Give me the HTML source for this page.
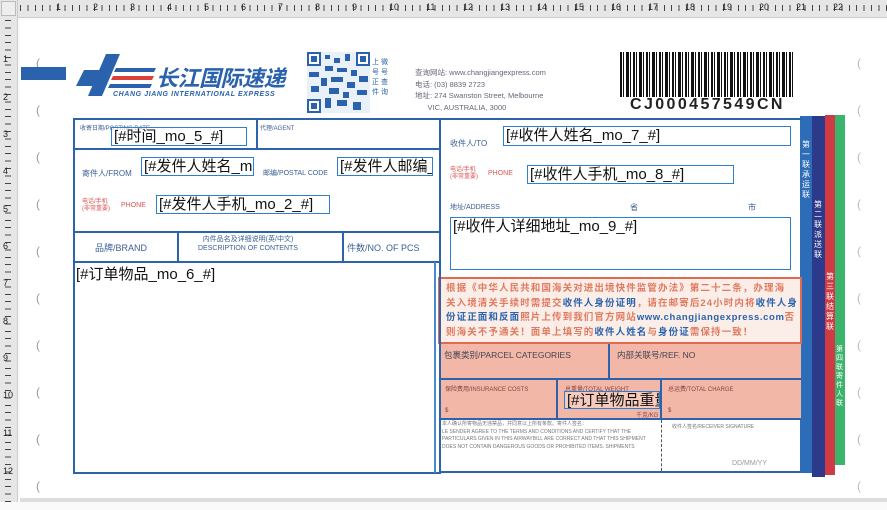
<!DOCTYPE html>
<html><head><meta charset="utf-8"><style>
*{margin:0;padding:0;box-sizing:border-box}
body{width:887px;height:502px;position:relative;overflow:hidden;background:#fafafa;font-family:"Liberation Sans","Noto Sans CJK SC",sans-serif}
.a{position:absolute}
.f{position:absolute;border:1px solid #2f7fd0;background:rgba(255,255,255,.6);font-family:"Liberation Sans","Noto Sans CJK SC",sans-serif;font-size:15px;line-height:17px;color:#111;white-space:nowrap;overflow:hidden;padding-left:2px}
.lb{position:absolute;font-size:8px;color:#3a5f95;white-space:nowrap}
.ln{position:absolute;background:#2d63ad}
.sm{position:absolute;font-size:6px;color:#556;white-space:nowrap}
.b{color:#2a62ad}
</style></head><body>
<div class="a" style="left:0;top:0;width:887px;height:18px;background:#e6e6e6;border-bottom:1px solid #ccc"></div>
<div class="a" style="left:0;top:0;width:18px;height:502px;background:#e6e6e6;border-right:1px solid #ccc"></div>
<div class="a" style="left:1px;top:1px;width:15px;height:15px;border:1px solid #bbb;background:#eee"></div>
<div class="a" style="left:20px;top:5px;width:867px;height:6px;background:repeating-linear-gradient(90deg,#444 0 1px,transparent 1px 7.4px)"></div>
<div class="a" style="left:5px;top:20px;width:6px;height:482px;background:repeating-linear-gradient(180deg,#444 0 1px,transparent 1px 7.4px)"></div>
<div class="a" style="left:0;top:2px;width:887px;font-size:9px;color:#222">
<span class="a" style="left:56px">1</span><span class="a" style="left:93px">2</span><span class="a" style="left:130px">3</span><span class="a" style="left:167px">4</span><span class="a" style="left:204px">5</span><span class="a" style="left:241px">6</span><span class="a" style="left:278px">7</span><span class="a" style="left:315px">8</span><span class="a" style="left:352px">9</span><span class="a" style="left:389px">10</span><span class="a" style="left:426px">11</span><span class="a" style="left:463px">12</span><span class="a" style="left:500px">13</span><span class="a" style="left:537px">14</span><span class="a" style="left:574px">15</span><span class="a" style="left:611px">16</span><span class="a" style="left:648px">17</span><span class="a" style="left:685px">18</span><span class="a" style="left:722px">19</span><span class="a" style="left:759px">20</span><span class="a" style="left:796px">21</span><span class="a" style="left:833px">22</span></div>
<div class="a" style="left:3px;top:0;font-size:9px;color:#222">
<span class="a" style="top:54px">1</span><span class="a" style="top:92px">2</span><span class="a" style="top:129px">3</span><span class="a" style="top:166px">4</span><span class="a" style="top:204px">5</span><span class="a" style="top:241px">6</span><span class="a" style="top:278px">7</span><span class="a" style="top:316px">8</span><span class="a" style="top:353px">9</span><span class="a" style="top:390px">10</span><span class="a" style="top:428px">11</span><span class="a" style="top:466px">12</span></div>
<div class="a" style="left:20px;top:20px;width:867px;height:478px;background:#fff"></div>
<div class="a" style="left:20px;top:498px;width:867px;height:4px;background:#ddd"></div>
<div class="a" style="left:36px;top:40px;font-size:12px;color:#999;line-height:47px">(<br>(<br>(<br>(<br>(<br>(<br>(<br>(<br>(<br>(</div>
<div class="a" style="left:857px;top:40px;font-size:12px;color:#bbb;line-height:47px">(<br>(<br>(<br>(<br>(<br>(<br>(<br>(<br>(<br>(</div>
<div class="a" style="left:21px;top:67px;width:45px;height:13px;background:#2a62ad"></div>
<svg class="a" style="left:76px;top:50px" width="84" height="50">
<path d="M8 20 L28 20 L20 36 L0 36Z" fill="#2a62ad"/><path d="M30 4 L44 4 L26 46 L12 46Z" fill="#2a62ad"/>
<path d="M40 18 L80 18 L78 22 L38 22Z" fill="#2a62ad"/><path d="M37 26 L78 26 L76 30 L35 30Z" fill="#d9403a"/><path d="M34 34 L76 34 L74 38 L32 38Z" fill="#2a62ad"/></svg>
<div class="a" style="left:156px;top:61px;font-size:22px;font-weight:bold;font-style:italic;color:#2a62ad;letter-spacing:-0.5px">长江国际速递</div>
<div class="a" style="left:113px;top:91px;font-size:7px;font-style:italic;font-weight:bold;color:#2a62ad;letter-spacing:.6px">CHANG JIANG INTERNATIONAL EXPRESS</div>
<svg class="a" style="left:307px;top:52px" width="63" height="61">
<rect width="63" height="61" fill="#eaf0f8"/>
<g fill="#2a62ad"><rect x="0" y="0" width="14" height="14"/><rect x="49" y="0" width="14" height="14"/><rect x="0" y="47" width="14" height="14"/></g>
<g fill="#fff"><rect x="2" y="2" width="10" height="10"/><rect x="51" y="2" width="10" height="10"/><rect x="2" y="49" width="10" height="10"/></g>
<g fill="#2a62ad"><rect x="4" y="4" width="6" height="6"/><rect x="53" y="4" width="6" height="6"/><rect x="4" y="51" width="6" height="6"/>
<rect x="18" y="3" width="5" height="4"/><rect x="27" y="6" width="6" height="5"/><rect x="38" y="2" width="5" height="7"/><rect x="18" y="14" width="8" height="5"/><rect x="30" y="16" width="10" height="4"/><rect x="44" y="18" width="6" height="6"/><rect x="2" y="20" width="10" height="5"/><rect x="52" y="24" width="9" height="6"/><rect x="14" y="26" width="6" height="8"/><rect x="24" y="25" width="12" height="5"/><rect x="40" y="30" width="8" height="6"/><rect x="4" y="34" width="8" height="6"/><rect x="22" y="36" width="10" height="6"/><rect x="50" y="38" width="10" height="5"/><rect x="18" y="46" width="6" height="10"/><rect x="30" y="48" width="10" height="6"/><rect x="46" y="50" width="8" height="8"/><rect x="36" y="40" width="6" height="6"/></g></svg>
<div class="a" style="left:372px;top:58px;font-size:7px;line-height:10px;color:#2a62ad;width:22px">上 微<br>号 号<br>正 查<br>件 询</div>
<div class="a" style="left:415px;top:67px;font-size:7.5px;line-height:11.5px;color:#667;white-space:nowrap">查询网站: www.changjiangexpress.com<br>电话: (03) 8839 2723<br>地址: 274 Swanston Street, Melbourne<br>&nbsp;&nbsp;&nbsp;&nbsp;&nbsp;&nbsp;VIC, AUSTRALIA, 3000</div>
<div class="a" style="left:620px;top:52px;width:173px;height:45px;background:repeating-linear-gradient(90deg,#111 0 2px,#fff 2px 3px,#111 3px 4px,#fff 4px 6px,#111 6px 9px,#fff 9px 10px,#111 10px 11px,#fff 11px 13px)"></div>
<div class="a" style="left:630px;top:96px;font-size:16px;font-weight:bold;color:#222;letter-spacing:2.4px">CJ000457549CN</div>
<div class="a" style="left:800px;top:116px;width:12px;height:357px;background:#2d6cb6"></div>
<div class="a" style="left:812px;top:116px;width:13px;height:361px;background:#2b3a8a"></div>
<div class="a" style="left:825px;top:115px;width:10px;height:360px;background:#d03a44"></div>
<div class="a" style="left:835px;top:115px;width:10px;height:350px;background:#3bb46c"></div>
<div class="a" style="left:802px;top:140px;width:10px;font-size:8px;line-height:10px;color:#fff">第一联 承运联</div>
<div class="a" style="left:814px;top:200px;width:10px;font-size:8px;line-height:10px;color:#fff">第二联 派送联</div>
<div class="a" style="left:826px;top:272px;width:9px;font-size:8px;line-height:10px;color:#fff">第三联 结算联</div>
<div class="a" style="left:836px;top:345px;width:9px;font-size:7px;line-height:9px;color:#fff">第四联 寄件人联</div>
<div class="a" style="left:73px;top:118px;width:368px;height:356px;border:2px solid #2d63ad"></div>
<div class="ln" style="left:73px;top:148px;width:368px;height:2px"></div>
<div class="ln" style="left:256px;top:118px;width:2px;height:31px"></div>
<div class="ln" style="left:73px;top:231px;width:368px;height:2px"></div>
<div class="ln" style="left:73px;top:261px;width:368px;height:2px"></div>
<div class="ln" style="left:177px;top:231px;width:2px;height:31px"></div>
<div class="ln" style="left:342px;top:231px;width:2px;height:31px"></div>
<div class="ln" style="left:434px;top:262px;width:2px;height:211px;background:#4a88cc"></div>
<div class="lb" style="left:80px;top:123px;font-size:6px">收寄日期/POSTING DATE</div>
<div class="lb" style="left:260px;top:123px;font-size:6px">代理/AGENT</div>
<div class="lb" style="left:82px;top:168px">寄件人/FROM</div>
<div class="lb" style="left:263px;top:168px;font-size:7px">邮编/POSTAL CODE</div>
<div class="lb" style="left:82px;top:199px;font-size:6px;color:#d55;line-height:7px">电话/手机<br>(非常重要)</div>
<div class="lb" style="left:121px;top:202px;font-size:7px;color:#d55">PHONE</div>
<div class="lb" style="left:95px;top:241px;font-size:9px">品牌/BRAND</div>
<div class="lb" style="left:198px;top:235px;font-size:7px;line-height:9px;text-align:center">内件品名及详细说明(英/中文)<br>DESCRIPTION OF CONTENTS</div>
<div class="lb" style="left:347px;top:241px;font-size:9px">件数/NO. OF PCS</div>
<div class="f" style="left:111px;top:127px;width:136px;height:19px">[#时间_mo_5_#]</div>
<div class="f" style="left:141px;top:157px;width:113px;height:19px">[#发件人姓名_mo_1_#]</div>
<div class="f" style="left:337px;top:157px;width:96px;height:19px">[#发件人邮编_mo_3_#]</div>
<div class="f" style="left:156px;top:195px;width:174px;height:19px">[#发件人手机_mo_2_#]</div>
<div class="a" style="left:76px;top:263px;font-size:15px;color:#111">[#订单物品_mo_6_#]</div>
<div class="ln" style="left:440px;top:118px;width:362px;height:2px"></div>
<div class="lb" style="left:450px;top:138px">收件人/TO</div>
<div class="lb" style="left:450px;top:167px;font-size:6px;color:#d55;line-height:7px">电话/手机<br>(非常重要)</div>
<div class="lb" style="left:488px;top:170px;font-size:7px;color:#d55">PHONE</div>
<div class="lb" style="left:450px;top:202px;font-size:7px">地址/ADDRESS</div>
<div class="lb" style="left:630px;top:202px">省</div><div class="lb" style="left:748px;top:202px">市</div>
<div class="f" style="left:503px;top:126px;width:288px;height:20px">[#收件人姓名_mo_7_#]</div>
<div class="f" style="left:527px;top:165px;width:207px;height:19px">[#收件人手机_mo_8_#]</div>
<div class="f" style="left:450px;top:217px;width:341px;height:53px">[#收件人详细地址_mo_9_#]</div>
<div class="a" style="left:438px;top:277px;width:364px;height:67px;border:2px solid #e06a50;background:#fbeee8;padding:3px 6px;font-size:9.5px;line-height:14.5px;color:#e07a60;font-weight:bold;overflow:hidden;white-space:nowrap;letter-spacing:1.1px">根据《中华人民共和国海关对进出境快件监管办法》第二十二条，办理海<br>关入境清关手续时需提交<span class="b">收件人身份证明</span>，请在邮寄后24小时内将<span class="b">收件人身</span><br><span class="b">份证正面和反面</span>照片上传到我们官方网站<span class="b" style="letter-spacing:0.6px">www.changjiangexpress.com</span>否<br>则海关不予通关！面单上填写的<span class="b">收件人姓名</span>与<span class="b">身份证</span>需保持一致！</div>
<div class="a" style="left:440px;top:344px;width:361px;height:75px;background:#f2b7a6"></div>
<div class="ln" style="left:440px;top:378px;width:361px;height:2px"></div>
<div class="ln" style="left:608px;top:344px;width:2px;height:35px"></div>
<div class="ln" style="left:556px;top:379px;width:2px;height:40px"></div>
<div class="ln" style="left:660px;top:379px;width:2px;height:40px"></div>
<div class="ln" style="left:440px;top:418px;width:361px;height:2px"></div>
<div class="ln" style="left:440px;top:471px;width:361px;height:2px"></div>
<div class="ln" style="left:439px;top:118px;width:2px;height:355px"></div>
<div class="a" style="left:661px;top:420px;width:0;height:51px;border-left:1px dashed #555"></div>
<div class="lb" style="left:444px;top:349px;font-size:8.5px;color:#445">包裹类别/PARCEL CATEGORIES</div>
<div class="lb" style="left:617px;top:349px;font-size:8.5px;color:#445">内部关联号/REF. NO</div>
<div class="sm" style="left:445px;top:384px;color:#844">保险费用/INSURANCE COSTS</div>
<div class="sm" style="left:565px;top:384px;color:#844">总重量/TOTAL WEIGHT</div>
<div class="sm" style="left:668px;top:384px;color:#844">总运费/TOTAL CHARGE</div>
<div class="sm" style="left:445px;top:408px;color:#844">$</div><div class="sm" style="left:668px;top:408px;color:#844">$</div>
<div class="sm" style="left:636px;top:410px;color:#844">千克/KG</div>
<div class="f" style="left:564px;top:391px;width:96px;height:18px;background:#f6cbbd">[#订单物品重量_mo_10_#]</div>
<div class="sm" style="left:442px;top:421px;width:215px;white-space:normal;line-height:7.5px;font-size:5px;color:#777">本人确认所寄物品无违禁品，并同意以上所有条款。寄件人签名：<br>LE SENDER AGREE TO THE TERMS AND CONDITIONS AND CERTIFY THAT THE PARTICULARS GIVEN IN THIS AIRWAYBILL ARE CORRECT AND THAT THIS SHIPMENT DOES NOT CONTAIN DANGEROUS GOODS OR PROHIBITED ITEMS. SHIPMENTS</div>
<div class="sm" style="left:672px;top:423px;font-size:5px;color:#777">收件人签名/RECEIVER SIGNATURE</div>
<div class="sm" style="left:732px;top:460px;font-size:7px;color:#999">DD/MM/YY</div>
</body></html>
